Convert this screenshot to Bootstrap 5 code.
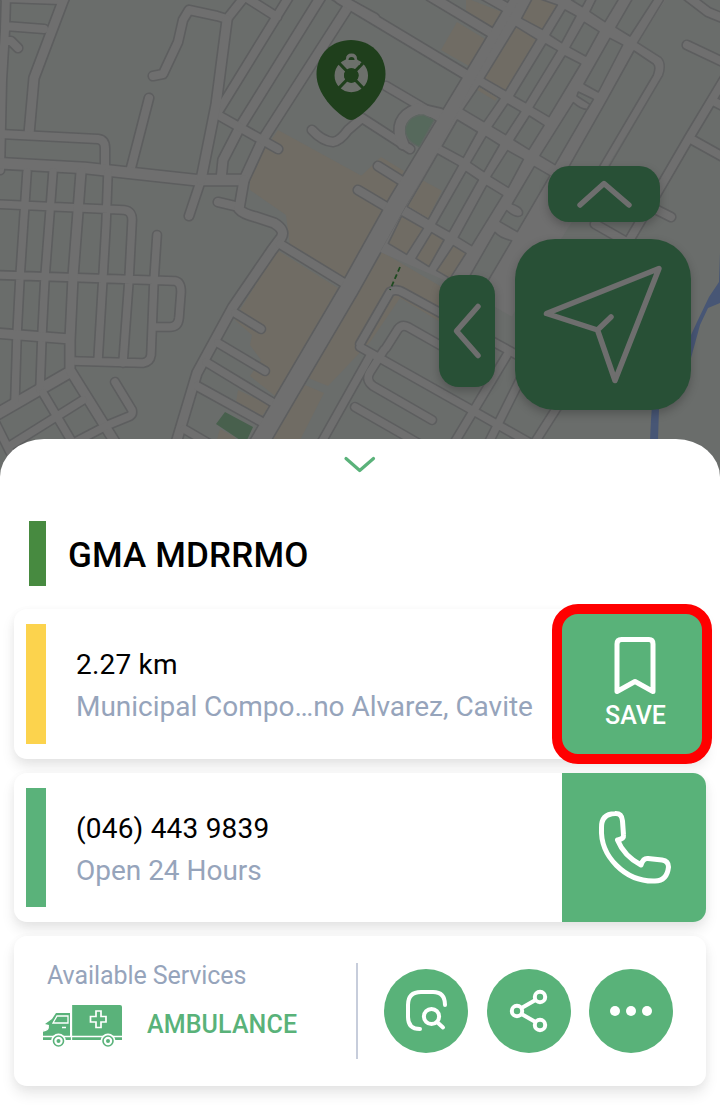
<!DOCTYPE html>
<html lang="en">
<head>
<meta charset="utf-8">
<meta name="viewport" content="width=device-width, initial-scale=1">
<title>GMA MDRRMO</title>
<link href="https://cdn.jsdelivr.net/npm/bootstrap@5.3.0/dist/css/bootstrap.min.css" rel="stylesheet">
<style>
  :root { --leaf: #59b279; --slate: #96a4bb; }
  body { font-family: Roboto, "Liberation Sans", sans-serif; color: #000; }
  .app { width: 720px; height: 1112px; }
  .map { height: 480px; background: #6a6d6b; }
  .map > svg { display: block; }
  .road { fill: none; stroke-linecap: round; stroke-linejoin: round; }
  #streets path { --w: 7.4px; stroke-width: calc(var(--w) + var(--edge)); }
  #streets .r9 { --w: 8px; } #streets .r10 { --w: 9px; } #streets .r12 { --w: 10.5px; } #streets .r18 { --w: 17.5px; }
  .casing { stroke: #5d5e5f; --edge: 3.2px; }
  .surface { stroke: #6f6f6f; --edge: 0px; }
  .block { fill: #6a6d6b; stroke: #5e5f60; stroke-width: 4.8; stroke-linejoin: round; }
  .tan { fill: #706c64; }
  .pad { background: #285036; box-shadow: 0 4px 10px rgba(0,0,0,.22); }
  .pad svg, .tile svg, .dot svg { display: block; }
  .pad-up { left: 548px; top: 166px; width: 112px; height: 56px; border-radius: 21px; }
  .pad-left { left: 439px; top: 275px; width: 56px; height: 112px; border-radius: 20px; }
  .pad-main { left: 515px; top: 239px; width: 176px; height: 171px; border-radius: 40px; }
  .sheet { margin-top: -41.5px; height: 673.5px; border-radius: 44px 44px 0 0 / 38px 38px 0 0; padding: 0 14px; }
  .grip { height: 82.5px; padding-top: 16.5px; }
  .heading { height: 65px; margin: 0 0 23px 15px; }
  .heading i { width: 17px; height: 65px; background: #478a40; }
  .heading h1 { font-size: 35px; font-weight: 500; margin: 4px 0 0 22px; line-height: 1; letter-spacing: .15px; }
  .panel { height: 150px; border-radius: 13px; background: #fff; box-shadow: 0 8px 14px rgba(0,0,0,.09), 0 2px 10px rgba(0,0,0,.035); margin-bottom: 14px; }
  .panel-phone { height: 149px; }
  .stripe { width: 20px; height: 120px; margin: 15px 30px 0 12px; }
  .panel-phone .stripe { height: 119px; }
  .info { font-size: 28px; line-height: 42px; padding-top: 35px; letter-spacing: .2px; }
  .info .muted { letter-spacing: -.02px; }
  .muted { color: var(--slate); }
  .tile { width: 144px; background: var(--leaf); border-radius: 0 13px 13px 0; }
  .save { width: 160px; height: 160px; margin: -5px -6px 0 0; border: 10px solid #f00; border-radius: 26px; background: var(--leaf); font-size: 25px; font-weight: 500; }
  .save svg { margin: 21px 0 0 6px; }
  .save span { line-height: 30px; margin-top: 4px; margin-left: 7px; }
  .services { width: 342px; padding: 25px 0 0 28px; font-size: 25px; }
  .services .cap { line-height: 30px; padding-left: 5px; letter-spacing: -.08px; }
  .services b { font-weight: 500; color: var(--leaf); margin-left: 24px; line-height: 30px; letter-spacing: .12px; }
  .truck { height: 67px; }
  .rule { width: 2px; height: 96px; margin-top: 27px; background: #c7cddb; }
  .dots { padding: 33px 0 0 26px; gap: 18.5px; }
  .dot { width: 84px; height: 84px; background: var(--leaf); }
</style>
</head>
<body>
<main class="app bg-white overflow-hidden">
  <section class="map position-relative">
    <svg width="720" height="480" viewBox="0 0 720 480">
      <defs>
        <g id="streets">
          <path class="r9" d="M6-5L5 30L2 80L0 170M5-2L60 0M5 26L44 29M5 41L11 41L18 48"/>
          <path class="r10" d="M67-8L63 1L34 78L29 134M322-5L240 127L223 160L221 180M348 7L262 141L244 180"/>
          <path class="r9" d="M0 134L98 139Q105 140 105 148L105 168M149 98L131 168M153 76L163 74L178 42L183 20L189 10L217 16L227 19L246-5M290-5L218 112M247-2L277 17M335-4L375 18M218 115L278 149M218 202L239 207M312 130Q322 141 333 142Q340 141 348 130L362 118L410 149M189 216L201 180"/>
          <path class="r12" d="M-5 163L85 168L195 180L243 180M70 372L-8 417"/>
          <path class="r10" d="M227 20L216 105L209 140L201 180M244 180L239 209Q243 214 256 217L274 223Q286 230 281 238L272 250L233 307L197 373L174 450"/>
          <path d="M27 172L20 277L17 335L15 400M53 172L45 277L42 335L40 390M108 172L106 225L103 277L98 361M-5 204L124 210Q133 211 132 222L129 280L123 363M157 235L154 280L151 355Q150 362 143 363L72 361M-5 275L175 281Q181 282 181 292L179 318Q178 327 170 327L153 327"/>
          <path class="r10" d="M81 172L73 277L70 340L70 368M-5 333L70 339M70 370L118 447"/>
          <path d="M115 382L132 410Q133 414 130 416L108 425L60 450M43 393L75 447M8 447L83 400M-4 424L10 452M235 313L261 329M218 343L265 371M206 362L272 402M184 429L220 450"/>
          <path class="r9" d="M280 244L344 283M197 386L262 422"/>
          <path class="r10" d="M340-1L465 74M430-4L495 35M484-5L509 9"/>
          <path class="r9" d="M386 86L420 106L442 119M378 166L402 181M358 190L390 209M687-4L708 12L725 19M687 45L725 63"/>
          <path class="r12" d="M403 144Q392 118 418 109L440 114"/>
          <path class="r9" d="M725 78L689 138L650 205L600 290M689 138L725 158M715 102L725 107M595 224L630 244M655 209L671 217"/>
          <path d="M360 344L390 292Q396 288 404 293L530 362M386 348L398 329Q402 324 408 327L475 365M360 347L470 409L560 460M384 350L370 372Q365 380 373 386L432 420M355 407L430 450M507 355L450 450M535 350L485 450M565 395L530 450M370 356L320 445"/>
          <path class="r18" d="M523-5L473 78L398 202L350 288L290 390L255 450"/>
        </g>
      </defs>
      <g class="tan">
        <path d="M278 130L360 175L396 190L345 278L290 246L286 215L250 190V180L264 150Z"/>
        <path d="M277 250L338 288L275 396L250 376L261 360L250 345L252 335L235 320L240 310Z"/>
        <path d="M238 390L270 405L262 416L236 402Z M220 429L235 437V450H214Z"/>
        <path d="M382 252L440 286L444 324L400 298L370 342L328 386L308 378ZM305 385L324 393L300 440H270Z"/>
        <path d="M466-2L502 12L492 29L466 15ZM457 22L485 39L469 66L441 50ZM381 157L404 171L388 202L360 188V177Z"/>
      </g>
      <path fill="#48604d" d="M225 412L253 427L247 440H240L216 424Z"/>
      <use href="#streets" class="road casing"/>
      <use href="#streets" class="road surface"/>
      <g transform="translate(360 0) scale(.33333)">
        <path fill="#6f6f6f" d="M480-5H920L833 128L905 174Q920 195 908 226L735 510L455 950L360 895L230 830L60 756L240 440L330 265Z"/>
        <path fill="none" stroke="#5f6061" stroke-width="4.5" d="M920-15L833 128L902 172Q920 190 908 226L700 580"/>
        <g class="block">
          <path d="M615 30L648 48L605 128L570 105ZM673 67L717 95L677 168L630 142ZM750 115L788 135L715 276L672 252ZM557 132L592 152L497 308L462 288ZM615 168L662 192L567 350L520 322Z"/>
          <path d="M358 258L420 296L372 365L310 328ZM443 312L482 335L437 404L397 380ZM508 348L552 376L507 448L462 420ZM292 360L352 396L310 472L247 438ZM378 410L418 435L372 515L332 488ZM443 452L490 478L445 562L393 530Z"/>
          <path d="M640 308Q665 330 682 328L700 298L655 276L651 288L690 313L585 494L540 467ZM523 500L570 527L472 695L420 665L440 632Q470 658 486 645Q495 625 457 612ZM233 462L295 497L205 657L142 620ZM318 515L355 540L268 695L228 672ZM380 557L428 586L335 737L295 712Z"/>
          <path d="M690 35L735 65L780-10H712ZM635 0L667 20L682-8ZM768 82L810 108L885-8H820ZM822 153L880 192Q889 200 880 225L700 530L610 530L735 310Z"/>
          <path d="M405 697Q420 715 455 722L365 875L320 845Z"/>
          <path class="tan" d="M468 80L530 118L437 272L373 235ZM520-10L592 15L547 88L485 55ZM125 648L190 685L140 763L85 730ZM215 698L252 720L207 800L168 775ZM280 737L318 760L270 835L230 812Z"/>
        </g>
        <path class="tan" d="M190 542L246 572L204 654L145 619ZM358 262L412 294L405 302L352 270Z"/>
        <path fill="#56695c" stroke="#5d6761" stroke-width="4" d="M222 360L178 440Q130 420 138 380Q150 345 190 345Z"/>
      </g>
      <path fill="none" stroke="#1e4a20" stroke-width="1.8" stroke-dasharray="5 3" d="M400 267L390 290"/>
      <path fill="#475675" d="M720 253L719 282L709 297L697 322L691 335V358L700 325L708 308L720 303ZM652 405L659 408L658 440H650L651 420Z"/>
      <path fill="#1f3f1c" d="M351 40C370 40 385.500 54 385.500 74C385.500 94 367 112 355 119Q351 121 347 119C335 112 316.500 94 316.500 74C316.500 54 332 40 351 40Z"/>
      <circle cx="351.300" cy="75.500" r="12" fill="none" stroke="#6c706b" stroke-width="9.500"/>
      <path d="M339 63L363 88M363 63L339 88" stroke="#1f3f1c" stroke-width="3.200"/>
      <circle cx="351.300" cy="75.500" r="7.200" fill="#1f3f1c"/>
      <path d="M343 65L346 59Q346 53.500 351.500 53.500T357 59L360 65Z" fill="#6c706b"/>
      <path d="M348.500 60Q348.500 57 351.500 57T354.500 60Z" fill="#1f3f1c"/>
    </svg>
    <div class="pad pad-up position-absolute"><svg width="112" height="56" fill="none" stroke="#6e6e6e" stroke-width="5.500" stroke-linecap="round" stroke-linejoin="round"><path d="M32 39L56 17.500L81 39"/></svg></div>
    <div class="pad pad-left position-absolute"><svg width="56" height="112" fill="none" stroke="#6e6e6e" stroke-width="5.500" stroke-linecap="round" stroke-linejoin="round"><path d="M39 31.500L17.500 56L39 80.500"/></svg></div>
    <div class="pad pad-main position-absolute"><svg width="176" height="171" fill="none" stroke="#6e6e6e" stroke-width="5.500" stroke-linecap="round" stroke-linejoin="round"><path d="M31.500 74.500L144 29.500L100 141.500L82.500 91ZM82.500 91L96 78"/></svg></div>
  </section>

  <section class="sheet bg-white position-relative">
    <div class="grip d-flex justify-content-center"><svg width="34" height="20" fill="none" stroke="#5ab27a" stroke-width="3.200" stroke-linecap="round" stroke-linejoin="round"><path d="M3 3.500L16.700 15.500L30.500 3.500"/></svg></div>
    <header class="heading d-flex align-items-center"><i></i><h1>GMA MDRRMO</h1></header>

    <article class="panel d-flex">
      <div class="stripe" style="background:#fcd34d"></div>
      <div class="info flex-grow-1 text-nowrap"><div>2.27 km</div><div class="muted">Municipal Compo…no Alvarez, Cavite</div></div>
      <div class="save position-relative flex-shrink-0 d-flex flex-column align-items-center text-white">
        <svg class="flex-shrink-0" width="46" height="62" fill="none" stroke="#fff" stroke-width="5" stroke-linejoin="round"><path d="M5 9Q5 4.500 9.500 4.500H37Q41 4.500 41 9V56.500L23 46.500L5 56.500Z"/></svg>
        <span>SAVE</span>
      </div>
    </article>

    <article class="panel panel-phone d-flex">
      <div class="stripe" style="background:#5ab27a"></div>
      <div class="info flex-grow-1"><div>(046) 443 9839</div><div class="muted">Open 24 Hours</div></div>
      <div class="tile flex-shrink-0"><svg width="144" height="149" fill="none" stroke="#fff" stroke-width="5" stroke-linejoin="round"><path d="M39.500 55Q39 41 53 40.500Q60 40 60.500 48L61.500 62Q62 66 55.500 67Q62 83 79 92Q81 85 86 85.500L100 87Q106.500 88 106.500 94Q105 108 93 108C63 109 38 83 39.500 55Z"/></svg></div>
    </article>

    <article class="panel d-flex mb-0">
      <div class="services flex-shrink-0">
        <div class="cap muted">Available Services</div>
        <div class="truck d-flex align-items-center">
          <svg class="mt-1" width="81" height="44" viewBox="0 0 81 44">
            <g fill="#5ab27a"><path d="M30 0H78Q80 0 80 2V31H30Z"/><path d="M1 31V25Q7 26 7 20L3 19L10 14L14 8H28V31ZM1 32H80V35H1Z"/></g>
            <path d="M11 18L15 11H26V18ZM1 22H6Q7 25 1 26M20 22.500H24M1 31.500H80M29.500 0V35" fill="none" stroke="#fff" stroke-width="1.300"/>
            <path d="M54 6H59V11.500H64V17H59V22.500H54V17H48.500V11.500H54Z" fill="none" stroke="#fff" stroke-width="1.700"/>
            <g fill="#fff"><circle cx="16.500" cy="36" r="7.500"/><circle cx="66" cy="36" r="7.500"/></g>
            <g fill="none" stroke="#5ab27a" stroke-width="1.600"><circle cx="16.500" cy="36" r="5"/><circle cx="66" cy="36" r="5"/></g>
            <g fill="#5ab27a"><circle cx="16.500" cy="36" r="2"/><circle cx="66" cy="36" r="2"/></g>
          </svg>
          <b>AMBULANCE</b>
        </div>
      </div>
      <div class="rule flex-shrink-0"></div>
      <div class="dots d-flex">
        <div class="dot rounded-circle"><svg width="84" height="84" fill="none" stroke="#fff" stroke-width="4" stroke-linecap="round"><path d="M61 36C61 26 56 23 49 23H37Q24 23 24 36V48Q24 60 36 60"/><circle cx="47.500" cy="47.500" r="7.600"/><path d="M53 53L59 58.500"/></svg></div>
        <div class="dot rounded-circle"><svg width="84" height="84" fill="none" stroke="#fff" stroke-width="4"><circle cx="30" cy="42" r="5.200"/><circle cx="53" cy="28" r="5.200"/><circle cx="53" cy="56" r="5.200"/><path d="M34.500 39L48.500 31M34.500 45L48.500 53"/></svg></div>
        <div class="dot rounded-circle"><svg width="84" height="84" fill="#fff"><circle cx="26" cy="42" r="5"/><circle cx="42" cy="42" r="5"/><circle cx="58" cy="42" r="5"/></svg></div>
      </div>
    </article>
  </section>
</main>
<script src="https://cdn.jsdelivr.net/npm/bootstrap@5.3.0/dist/js/bootstrap.bundle.min.js"></script>
</body>
</html>
